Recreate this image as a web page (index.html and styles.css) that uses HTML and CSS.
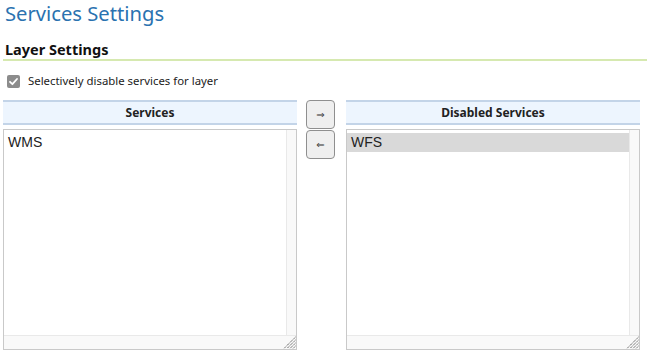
FILE: index.html
```html
<!DOCTYPE html>
<html lang="en">
<head>
    <meta charset="UTF-8">
    <title>Services Settings</title>
    <link rel="stylesheet" href="styles.css">
</head>
<body>
    <h1 class="page-title">Services Settings</h1>
    <h2 class="section-title">Layer Settings</h2>

    <label class="check-row">
        <span class="check-box">
            <svg width="13" height="13" viewBox="0 0 13 13"><path d="M3 6.8 L5.4 9.2 L10 4" fill="none" stroke="#fff" stroke-width="1.8" stroke-linecap="round" stroke-linejoin="round"/></svg>
        </span>
        Selectively disable services for layer
    </label>

    <div class="picker">
        <div class="panel">
            <div class="panel-header">Services</div>
            <div class="list-box">
                <div class="list-items">
                    <div class="list-item">WMS</div>
                </div>
                <div class="scroll-v"></div>
                <div class="scroll-h"></div>
                <div class="scroll-corner">
                    <svg width="14" height="14" viewBox="0 0 14 14"><path d="M13.5 2 L2 13.5 M13.5 5 L5 13.5 M13.5 8 L8 13.5 M13.5 11 L11 13.5" stroke="#555" stroke-width="1" stroke-dasharray="1.3 0.7"/></svg>
                </div>
            </div>
        </div>
        <div class="move-buttons">
            <button class="move-btn">&rArr;</button>
            <button class="move-btn">&lArr;</button>
        </div>
        <div class="panel">
            <div class="panel-header">Disabled Services</div>
            <div class="list-box">
                <div class="list-items">
                    <div class="list-item selected">WFS</div>
                </div>
                <div class="scroll-v"></div>
                <div class="scroll-h"></div>
                <div class="scroll-corner">
                    <svg width="14" height="14" viewBox="0 0 14 14"><path d="M13.5 2 L2 13.5 M13.5 5 L5 13.5 M13.5 8 L8 13.5 M13.5 11 L11 13.5" stroke="#555" stroke-width="1" stroke-dasharray="1.3 0.7"/></svg>
                </div>
            </div>
        </div>
    </div>
</body>
</html>
```

FILE: styles.css
```css
body {
    margin: 0;
    padding: 0 3px;
    font-family: "Noto Sans", "DejaVu Sans", sans-serif;
    color: #222;
    background: #fff;
}

.page-title {
    margin: 0;
    padding: 0 2px;
    font-size: 20.2px;
    font-weight: normal;
    line-height: 26px;
    color: #2a72b0;
}

.section-title {
    margin: 13px 0 0;
    padding: 0 2px;
    font-size: 14.5px;
    font-weight: bold;
    line-height: 20px;
    color: #111;
    border-bottom: 2px solid #d6e9b0;
}

.check-row {
    display: flex;
    align-items: center;
    gap: 8px;
    margin: 12px 0 0 4px;
    font-size: 11.4px;
    line-height: 16px;
}

.check-box {
    display: inline-flex;
    width: 13px;
    height: 13px;
    border-radius: 2px;
    background: #8c8c8c;
}

.picker {
    display: flex;
    margin-top: 11px;
}

.panel {
    width: 294px;
}

.panel-header {
    height: 21px;
    line-height: 21px;
    text-align: center;
    font-size: 12px;
    font-weight: bold;
    background: #edf5fe;
    border-top: 2px solid #c3d4e8;
    border-bottom: 2px solid #c3d4e8;
}

.list-box {
    display: grid;
    grid-template-columns: 1fr 10px;
    grid-template-rows: 1fr 14px;
    margin-top: 4px;
    height: 219px;
    border: 1px solid #c9c9c9;
    font-family: "Liberation Sans", Arial, sans-serif;
    font-size: 14px;
}

.list-items {
    padding-top: 3px;
    overflow: hidden;
}

.list-item {
    padding: 1px 4px;
    line-height: 17px;
}

.list-item.selected {
    background: #d9d9d9;
}

.scroll-v {
    background: #f9f9f9;
    border-left: 1px solid #e9e9e9;
}

.scroll-h {
    background: #f9f9f9;
    border-top: 1px solid #e9e9e9;
}

.scroll-corner {
    display: flex;
    justify-content: flex-end;
    align-items: flex-end;
    background: #f9f9f9;
    border-top: 1px solid #e9e9e9;
}

.scroll-corner svg {
    flex-shrink: 0;
}

.move-buttons {
    display: flex;
    flex-direction: column;
    gap: 1px;
    margin: 0 11px 0 9px;
}

.move-btn {
    width: 29px;
    height: 29px;
    padding: 0;
    border: 1px solid #8f8f8f;
    border-radius: 4px;
    background: #efefef;
    font-size: 10px;
    color: #333;
    font-family: "DejaVu Sans", sans-serif;
}
```
